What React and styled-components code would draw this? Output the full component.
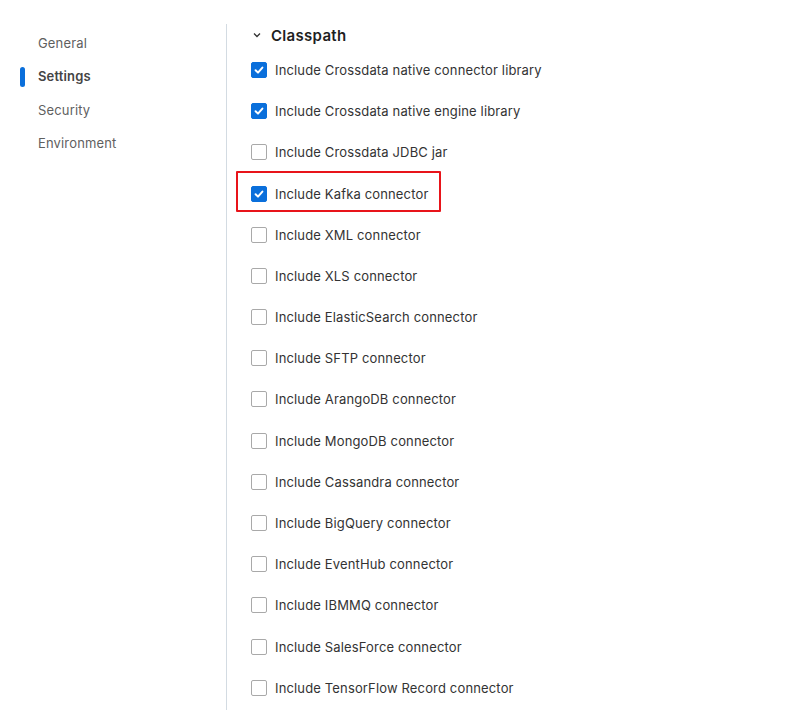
import React from "react";
import styled, { createGlobalStyle } from "styled-components";

const GlobalStyle = createGlobalStyle`
  body {
    margin: 0;
    background: #ffffff;
    font-family: Inter, "Noto Sans", sans-serif;
  }
`;

const navItems = ["General", "Settings", "Security", "Environment"];

const options = [
  { label: "Include Crossdata native connector library", checked: true },
  { label: "Include Crossdata native engine library", checked: true },
  { label: "Include Crossdata JDBC jar", checked: false },
  { label: "Include Kafka connector", checked: true, highlight: true },
  { label: "Include XML connector", checked: false },
  { label: "Include XLS connector", checked: false },
  { label: "Include ElasticSearch connector", checked: false },
  { label: "Include SFTP connector", checked: false },
  { label: "Include ArangoDB connector", checked: false },
  { label: "Include MongoDB connector", checked: false },
  { label: "Include Cassandra connector", checked: false },
  { label: "Include BigQuery connector", checked: false },
  { label: "Include EventHub connector", checked: false },
  { label: "Include IBMMQ connector", checked: false },
  { label: "Include SalesForce connector", checked: false },
  { label: "Include TensorFlow Record connector", checked: false },
];

const App = () => {
  return (
    <>
      <GlobalStyle />
      <Page>
        <Sidebar>
          {navItems.map((item) => (
            <NavItem key={item} $active={item === "Settings"}>
              {item}
            </NavItem>
          ))}
        </Sidebar>
        <Content>
          <SectionHeader>
            <Chevron viewBox="0 0 8 6" width="8" height="6">
              <path d="M1 1.5 L4 4.5 L7 1.5" fill="none" stroke="#333" strokeWidth="1.3" />
            </Chevron>
            <Title>Classpath</Title>
          </SectionHeader>
          <List>
            {options.map((opt) => (
              <Row key={opt.label} $highlight={opt.highlight}>
                <Box $checked={opt.checked}>
                  {opt.checked && (
                    <svg viewBox="0 0 16 16" width="16" height="16">
                      <path
                        d="M4.6 8.3 L7 10.6 L11.4 5.6"
                        fill="none"
                        stroke="#fff"
                        strokeWidth="2"
                        strokeLinecap="round"
                        strokeLinejoin="round"
                      />
                    </svg>
                  )}
                </Box>
                <Label>{opt.label}</Label>
              </Row>
            ))}
          </List>
        </Content>
      </Page>
    </>
  );
};

const Page = styled.div`
  display: flex;
  width: 792px;
  height: 710px;
  overflow: hidden;
`;

const Sidebar = styled.nav`
  width: 226px;
  flex-shrink: 0;
  padding-top: 26px;
  display: flex;
  flex-direction: column;
`;

const NavItem = styled.div`
  position: relative;
  height: 33.5px;
  display: flex;
  align-items: center;
  padding-left: 38px;
  font-size: 13px;
  letter-spacing: 0.15px;
  color: ${(p) => (p.$active ? "#444" : "#5f5f5f")};
  font-weight: ${(p) => (p.$active ? 600 : 400)};

  &::before {
    content: "";
    display: ${(p) => (p.$active ? "block" : "none")};
    position: absolute;
    left: 20px;
    top: 7px;
    width: 5px;
    height: 20px;
    border-radius: 3px;
    background: #0a6fdb;
  }
`;

const Content = styled.main`
  flex: 1;
  margin-top: 24px;
  border-left: 1px solid #d3dbe2;
  padding-left: 24px;
`;

const SectionHeader = styled.div`
  display: flex;
  align-items: center;
  height: 22px;
  margin-bottom: 3.4px;
`;

const Chevron = styled.svg`
  margin-left: 2px;
  margin-right: 10px;
`;

const Title = styled.h2`
  margin: 0;
  font-size: 15px;
  font-weight: 600;
  letter-spacing: 0.3px;
  color: #1f1f1f;
`;

const List = styled.div`
  display: flex;
  flex-direction: column;
`;

const Row = styled.label`
  position: relative;
  display: flex;
  align-items: center;
  gap: 8px;
  height: 41.2px;

  &::after {
    content: "";
    display: ${(p) => (p.$highlight ? "block" : "none")};
    position: absolute;
    left: -15px;
    top: -1.5px;
    width: 205px;
    height: 41px;
    box-sizing: border-box;
    border: 2px solid #e8141a;
    border-radius: 1px;
  }
`;

const Box = styled.span`
  width: 16px;
  height: 16px;
  box-sizing: border-box;
  border-radius: 2px;
  border: 1px solid ${(p) => (p.$checked ? "#0a6fdb" : "#a9a9a9")};
  background: ${(p) => (p.$checked ? "#0a6fdb" : "#fff")};
  display: flex;
  flex-shrink: 0;

  svg {
    margin: -1px;
  }
`;

const Label = styled.span`
  font-size: 13px;
  letter-spacing: 0.15px;
  color: #333;
`;

export default App;
